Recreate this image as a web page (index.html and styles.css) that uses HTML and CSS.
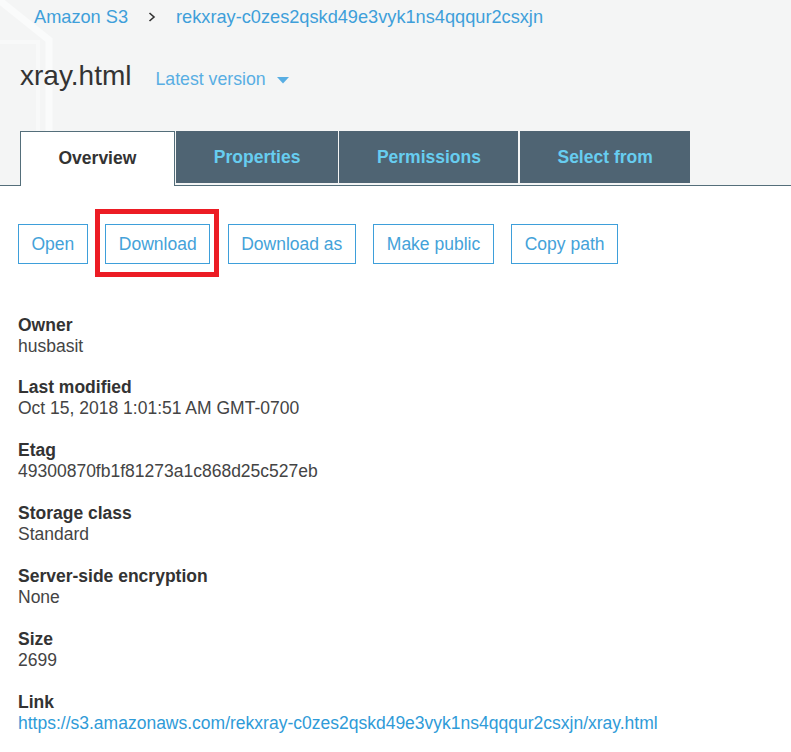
FILE: index.html
```html
<!DOCTYPE html>
<html lang="en">
<head>
<meta charset="utf-8">
<title>xray.html - Amazon S3</title>
<link rel="stylesheet" href="styles.css">
</head>
<body>
<header class="top">
  <svg class="deco" width="80" height="186" viewBox="0 0 80 186" aria-hidden="true">
    <path d="M -6 -4 L 49 40 L 49 190" fill="none" stroke="#fafbfb" stroke-width="7"/>
    <path d="M -4 42 L 38 42 L 38 190" fill="none" stroke="#f8f9f9" stroke-width="4"/>
  </svg>
  <nav class="crumbs">
    <a class="crumb" href="#">Amazon S3</a>
    <svg class="chev" width="8" height="10" viewBox="0 0 8 10" aria-hidden="true"><path d="M1.5 1 L6 5 L1.5 9" fill="none" stroke="#333" stroke-width="1.6"/></svg>
    <a class="crumb" href="#">rekxray-c0zes2qskd49e3vyk1ns4qqqur2csxjn</a>
  </nav>
  <div class="title-row">
    <h1 class="title">xray.html</h1>
    <span class="version">Latest version
      <svg class="caret" width="12" height="7" viewBox="0 0 12 7" aria-hidden="true"><path d="M0 0 L12 0 L6 6.5 Z" fill="#58aee3"/></svg>
    </span>
  </div>
  <div class="tabs">
    <div class="tab tab-active">Overview</div>
    <div class="tab">Properties</div>
    <div class="tab">Permissions</div>
    <div class="tab">Select from</div>
  </div>
</header>
<main class="content">
  <div class="actions">
    <button class="btn">Open</button>
    <span class="highlight-wrap">
      <button class="btn">Download</button>
      <span class="highlight"></span>
    </span>
    <button class="btn">Download as</button>
    <button class="btn">Make public</button>
    <button class="btn">Copy path</button>
  </div>
  <dl class="details">
    <div class="item"><dt>Owner</dt><dd>husbasit</dd></div>
    <div class="item"><dt>Last modified</dt><dd>Oct 15, 2018 1:01:51 AM GMT-0700</dd></div>
    <div class="item"><dt>Etag</dt><dd>49300870fb1f81273a1c868d25c527eb</dd></div>
    <div class="item"><dt>Storage class</dt><dd>Standard</dd></div>
    <div class="item"><dt>Server-side encryption</dt><dd>None</dd></div>
    <div class="item"><dt>Size</dt><dd>2699</dd></div>
    <div class="item"><dt>Link</dt><dd><a class="link" href="#">https://s3.amazonaws.com/rekxray-c0zes2qskd49e3vyk1ns4qqqur2csxjn/xray.html</a></dd></div>
  </dl>
</main>
</body>
</html>
```
FILE: styles.css
```css
* { box-sizing: border-box; }
html, body { margin: 0; padding: 0; }
body {
  background: #ffffff;
  font-family: "Liberation Sans", Arial, sans-serif;
  font-size: 17.5px;
  color: #444;
  overflow: hidden;
}
.top {
  position: relative;
  background: #f4f5f5;
  border-bottom: 1px solid #546e7a;
}
.deco {
  position: absolute;
  left: 0;
  top: 0;
}
.crumbs {
  position: relative;
  display: flex;
  align-items: center;
  padding: 5.5px 0 0 34px;
  font-size: 18.2px;
  line-height: 22px;
  height: 27.5px;
}
.crumb {
  color: #3e9fda;
  text-decoration: none;
}
.chev {
  margin: 0 20px 0 20px;
}
.title-row {
  position: relative;
  display: flex;
  align-items: baseline;
  padding-left: 20px;
  margin-top: 31.5px;
}
.title {
  margin: 0;
  font-weight: normal;
  font-size: 28px;
  line-height: 33px;
  color: #333;
}
.version {
  margin-left: 24px;
  color: #58aee3;
  font-size: 17.7px;
  line-height: 22px;
}
.caret {
  margin-left: 6px;
  vertical-align: 1px;
}
.tabs {
  position: relative;
  display: flex;
  align-items: flex-start;
  gap: 1.5px;
  padding-left: 20px;
  margin-top: 39px;
}
.tab {
  height: 52px;
  line-height: 52px;
  padding: 0 37.5px;
  background: #4f6473;
  color: #67cdf0;
  font-weight: bold;
  white-space: nowrap;
}
.tab-active {
  height: 55px;
  margin-bottom: -1px;
  line-height: 52px;
  background: #fff;
  color: #333;
  border: 1px solid #546e7a;
  border-bottom: none;
  padding: 0 37.5px;
}
.content {
  padding: 38px 0 0 18px;
}
.actions {
  display: flex;
  align-items: flex-start;
  gap: 17.5px;
}
.btn {
  height: 40px;
  padding: 0 12.5px;
  border: 1px solid #3e9fda;
  background: #fff;
  color: #44a2d9;
  font-family: inherit;
  font-size: 17.5px;
  line-height: 38px;
  margin: 0;
  white-space: nowrap;
}
.highlight-wrap {
  position: relative;
  display: block;
}
.highlight {
  position: absolute;
  left: -10px;
  right: -9px;
  top: -15px;
  bottom: -13px;
  border: 5px solid #ec1c24;
  pointer-events: none;
}
.details {
  margin: 50.5px 0 0 0;
}
.item {
  margin-bottom: 20.4px;
}
.item dt {
  font-weight: bold;
  color: #333;
  line-height: 21px;
}
.item dd {
  margin: 0;
  color: #444;
  line-height: 21.5px;
}
.link {
  color: #2f9bd8;
  text-decoration: none;
}
```
